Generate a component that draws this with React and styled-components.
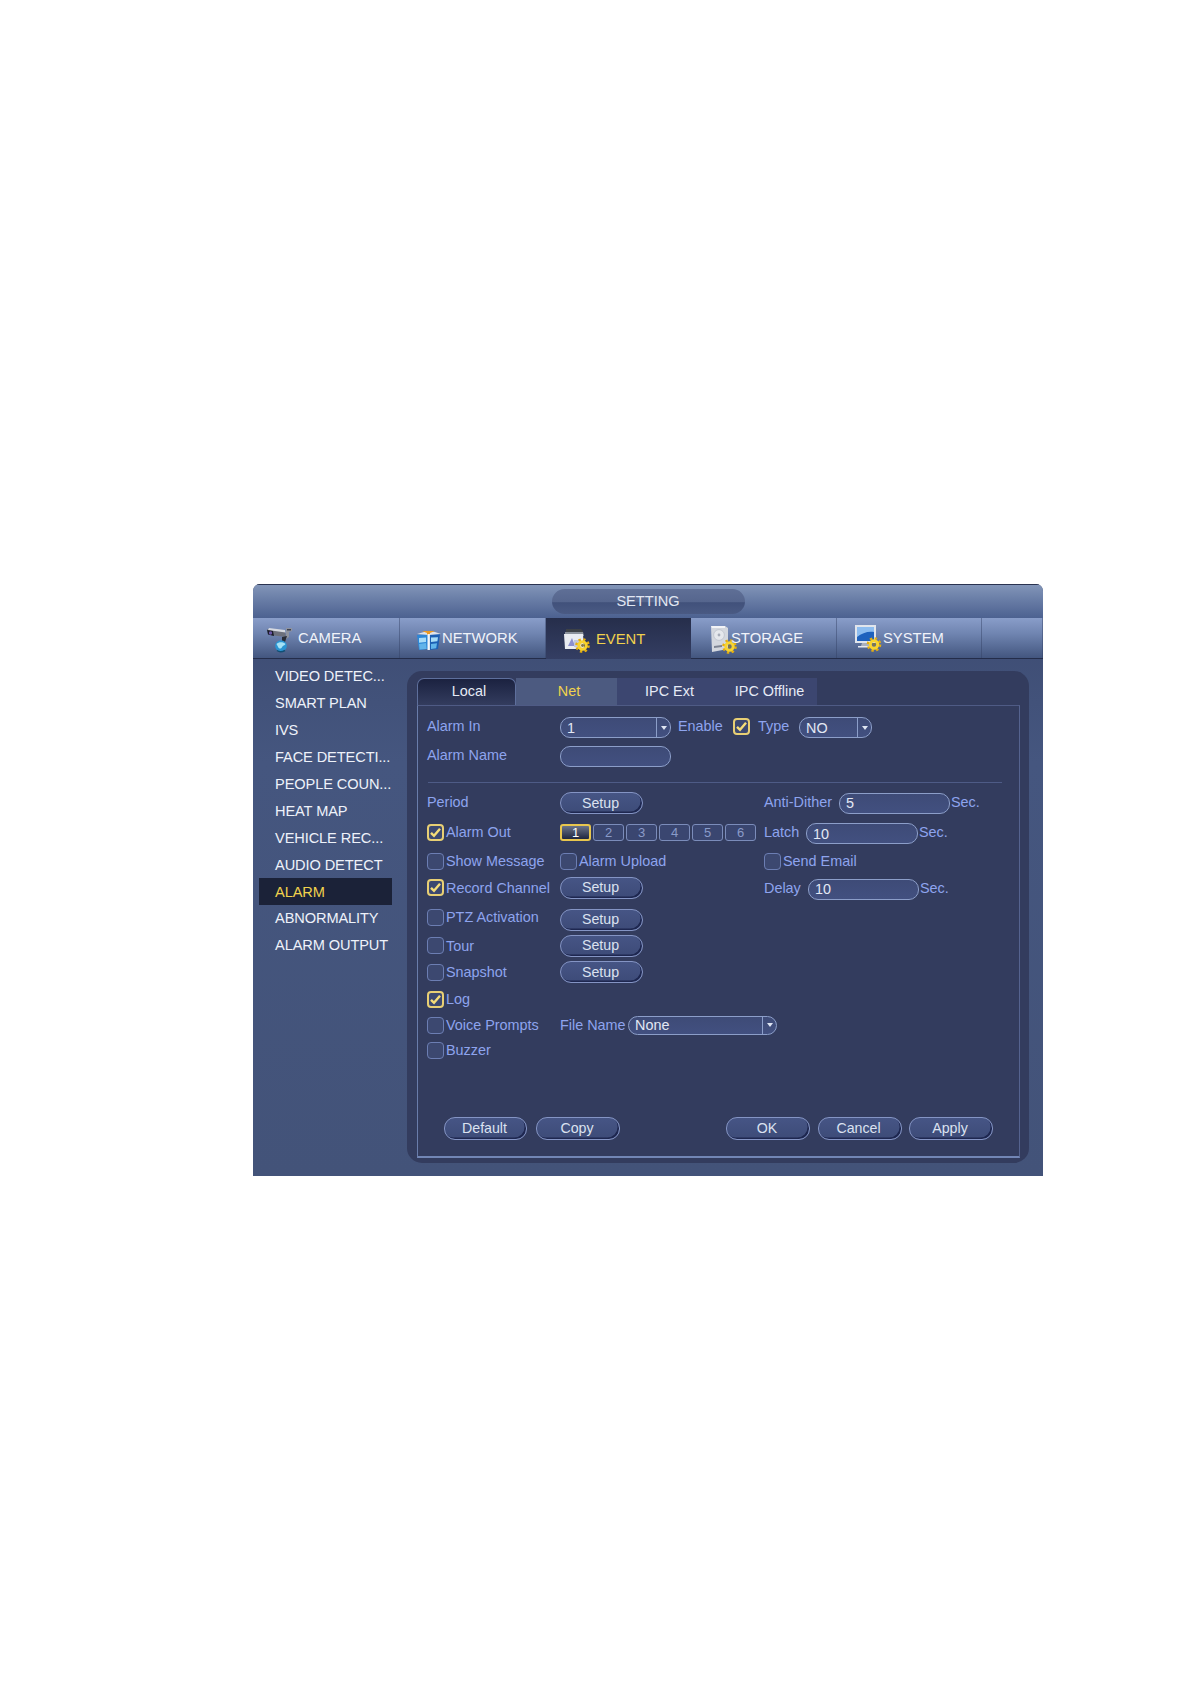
import React from "react";
import styled, { createGlobalStyle } from "styled-components";

const GlobalStyle = createGlobalStyle`
  html, body {
    margin: 0;
    padding: 0;
    background: #fff;
  }
  body {
    font-family: "Liberation Sans", Arial, sans-serif;
  }
`;

const Gear = ({ x, y }) => (
  <g transform={`translate(${x} ${y})`}>
    <circle r="6" fill="none" stroke="#e4ae10" strokeWidth="2.6" strokeDasharray="2.35 2.35" />
    <circle r="3.7" fill="none" stroke="#f9d42e" strokeWidth="3" />
    <circle r="1.4" fill="#8a7a38" />
  </g>
);

const CameraIcon = () => (
  <svg width="28" height="28" viewBox="0 0 28 28">
    <path d="M1 4l18 2 1 6-16-2z" fill="#6d707c" />
    <path d="M3 3l16 2 .5 2.5L2 5z" fill="#d6d9e0" />
    <path d="M1 5l6 1 1 5-6-1.5z" fill="#191a26" />
    <circle cx="4.5" cy="8" r="1.7" fill="#6a57a8" />
    <path d="M20 3h6v3l-3 1v5l-3 2z" fill="#8f939f" />
    <path d="M21 4h4v1.6h-4z" fill="#3e4250" />
    <path d="M16 12l5-1-2 6-3-1z" fill="#282b36" />
    <circle cx="15" cy="21" r="5.8" fill="#2a94d2" />
    <path d="M10.5 19c2-2.2 7-2.2 9 0-1 2-2.4 1-3.4 3s-3 2-4 0z" fill="#a4e2f6" />
    <path d="M11 25.5c2 1.6 5 1.6 8 0" stroke="#124f74" strokeWidth="1.5" fill="none" />
  </svg>
);

const NetworkIcon = () => (
  <svg width="26" height="26" viewBox="0 0 26 26">
    <path d="M1 9l11-1v15L3 24z" fill="#2d86d6" />
    <path d="M13 8l11 0-2 15-9 1z" fill="#1c5fb4" />
    <path d="M3 12l7-.6V16l-7 .8zM15 11.5l7-.2-.6 4-6.4.6z" fill="#a8dcf7" />
    <path d="M3 18l7-1 .6 6-7 .6zM15 18l6-.8-.8 5-5.2.8z" fill="#61b4ea" />
    <path d="M1 8l7-2 5-1 6 1 6 2-12 1z" fill="#dfe3ea" />
    <path d="M6 5h13l-5 2v2h-3V7z" fill="#ec9a23" />
    <path d="M11.5 8h2.4v16h-2.4z" fill="#f1f5fa" />
  </svg>
);

const EventIcon = () => (
  <svg width="27" height="27" viewBox="0 0 27 27">
    <path d="M3 3h15l2 2v4H3z" fill="#3d4146" />
    <path d="M2 6h18l1 4H2z" fill="#8b929c" />
    <path d="M1 8h19l1 15H2z" fill="#e9ecf2" />
    <path d="M5 20l4-8 3 8z" fill="#8b8fd0" />
    <path d="M11 14h6v7h-6z" fill="#c3c8dc" />
    <Gear x={19.5} y={19.5} />
  </svg>
);

const StorageIcon = () => (
  <svg width="28" height="30" viewBox="0 0 28 30">
    <path d="M1 2h14l3 2v21l-16 3z" fill="#d3d7de" />
    <path d="M1 2h14v2H2z" fill="#f3f4f7" />
    <circle cx="9" cy="11" r="5.4" fill="#e4e7ec" stroke="#c2c7d0" />
    <circle cx="9" cy="11" r="1.4" fill="#a5abb8" />
    <path d="M4 22l8-1v2l-8 1z" fill="#7d8493" />
    <Gear x={19.5} y={22.5} />
  </svg>
);

const SystemIcon = () => (
  <svg width="28" height="30" viewBox="0 0 28 30">
    <path d="M1 1h21v18H1z" fill="#e1e5ec" />
    <path d="M3 3h17v14H3z" fill="#1f62bd" />
    <path d="M3 3h17v5c-6-1-12 1-17 5z" fill="#8dbdf0" />
    <path d="M8 19h7l1 3H7z" fill="#aab1bd" />
    <path d="M4 22h14v1.6H4z" fill="#e6e9ef" />
    <Gear x={20} y={20.5} />
  </svg>
);

const CheckMark = () => (
  <svg width="13" height="13" viewBox="0 0 13 13">
    <path d="M2 6.8l3 3 6-7" fill="none" stroke="#f5dc78" strokeWidth="2.4" />
  </svg>
);

const Page = styled.div`
  min-height: 1684px;
  box-sizing: border-box;
  padding: 584px 0 0 253px;
  background: #fff;
`;

const Panel = styled.div`
  width: 790px;
  height: 592px;
  display: flex;
  flex-direction: column;
  overflow: hidden;
  border-radius: 7px 7px 0 0;
  background: linear-gradient(180deg, #3c4a70 0%, #45567f 30%, #435379 100%);
`;

const TitleBar = styled.div`
  height: 34px;
  box-sizing: border-box;
  flex: none;
  display: flex;
  align-items: center;
  justify-content: center;
  border-top: 1px solid #2a3350;
  background: linear-gradient(180deg, #8295b8 0%, #6e82aa 35%, #4c6190 100%);
`;

const TitlePill = styled.div`
  width: 193px;
  height: 25px;
  box-sizing: border-box;
  padding-bottom: 2px;
  display: flex;
  align-items: center;
  justify-content: center;
  border-radius: 13px;
  background: linear-gradient(180deg, #5f6f96 0%, #56668e 50%, #41517b 55%, #4a5a83 100%);
  color: #e2e7f2;
  font-size: 14.6px;
`;

const TabBar = styled.div`
  height: 41px;
  flex: none;
  display: flex;
  box-sizing: border-box;
  border-bottom: 1px solid #242d4a;
  background: linear-gradient(180deg, #899dc9 0%, #6f84b0 40%, #43567f 100%);
`;

const Tab = styled.div`
  width: ${(p) => p.$w}px;
  height: ${(p) => (p.$active ? "41px" : "40px")};
  box-sizing: border-box;
  padding-left: ${(p) => p.$pad}px;
  display: flex;
  align-items: center;
  border-right: 1px solid ${(p) => (p.$active ? "transparent" : "rgba(50, 64, 100, 0.45)")};
  background: ${(p) => (p.$active ? "linear-gradient(180deg, #262e4b 0%, #343e63 100%)" : "none")};
  color: ${(p) => (p.$active ? "#f1d24d" : "#f0f3fa")};
  font-size: 14.8px;
  svg {
    flex: none;
    margin-top: 2px;
    margin-right: ${(p) => p.$iconGap}px;
  }
`;

const Body = styled.div`
  flex: 1;
  display: flex;
  min-height: 0;
`;

const Sidebar = styled.ul`
  width: 154px;
  flex: none;
  margin: 0;
  padding: 4px 0 0 6px;
  box-sizing: border-box;
  list-style: none;
`;

const SideItem = styled.li`
  width: 133px;
  height: 26.9px;
  box-sizing: border-box;
  padding-left: 16px;
  display: flex;
  align-items: center;
  white-space: nowrap;
  font-size: 14.6px;
  letter-spacing: -0.1px;
  color: ${(p) => (p.$active ? "#f1d24d" : "#eef2fa")};
  background: ${(p) => (p.$active ? "#1b2238" : "none")};
`;

const Content = styled.div`
  flex: 1;
  margin: 12px 14px 13px 0;
  padding: 7px 9px 5px 10px;
  display: flex;
  flex-direction: column;
  border-radius: 15px;
  background: #333c5e;
`;

const SubTabs = styled.div`
  height: 27px;
  flex: none;
  display: flex;
`;

const SubTab = styled.div`
  width: ${(p) => p.$w}px;
  box-sizing: border-box;
  padding: 0 0 2px 5px;
  display: flex;
  align-items: center;
  justify-content: center;
  border-radius: ${(p) => (p.$local ? "7px 7px 0 0" : "0")};
  border: ${(p) => (p.$local ? "1px solid #5e6f9c" : "none")};
  border-bottom: none;
  background: ${(p) =>
    p.$local
      ? "linear-gradient(180deg, #1b2240 0%, #333c5e 100%)"
      : p.$net
      ? "#4c5a80"
      : "#3c4670"};
  color: ${(p) => (p.$net ? "#f1d24d" : "#e6ebf6")};
  font-size: 14.4px;
`;

const Frame = styled.div`
  flex: 1;
  display: flex;
  flex-direction: column;
  box-sizing: border-box;
  padding: 8px 0 0 9px;
  border: 1px solid #4f5b85;
  border-left-color: #6a7dab;
  border-right-color: #55638f;
  border-bottom: 2px solid #7286b5;
`;

const Row = styled.div`
  height: 22px;
  flex: none;
  margin-top: ${(p) => p.$top || 0}px;
  display: grid;
  grid-template-columns: 133px 204px 1fr;
`;

const Cell = styled.div`
  display: flex;
  align-items: center;
  grid-column: ${(p) => p.$col || "auto"};
  white-space: nowrap;
`;

const Divider = styled.div`
  width: 574px;
  height: 1px;
  flex: none;
  margin: 17px 0 6px 1px;
  background: #4e5b86;
`;

const Label = styled.span`
  display: inline-block;
  width: ${(p) => (p.$w ? `${p.$w}px` : "auto")};
  margin-left: ${(p) => p.$ml || 0}px;
  flex: none;
  color: #8ea4ee;
  font-size: 14.4px;
`;

const CheckLabel = styled.label`
  display: flex;
  align-items: center;
  gap: 2px;
  color: #8ea4ee;
  font-size: 14.4px;
`;

const Box = styled.span`
  width: 17px;
  height: 17px;
  box-sizing: border-box;
  flex: none;
  margin-right: ${(p) => p.$mr || 0}px;
  display: flex;
  align-items: center;
  justify-content: center;
  border-radius: 4px;
  border: ${(p) => (p.$on ? "2px solid #e8cf74" : "1.5px solid #6c7eb3")};
  background: #3c4870;
`;

const Field = styled.div`
  width: ${(p) => p.$w}px;
  height: ${(p) => p.$h || 21}px;
  box-sizing: border-box;
  flex: none;
  margin-top: ${(p) => p.$nudge || 0}px;
  padding-left: 6px;
  display: flex;
  align-items: center;
  justify-content: space-between;
  border-radius: 10px;
  border: 1.5px solid #8c9ec9;
  background: linear-gradient(180deg, #3e4b77 0%, #425080 100%);
  color: #e3e8f4;
  font-size: 14.4px;
`;

const Caret = styled.span`
  width: 14px;
  height: 100%;
  box-sizing: border-box;
  display: flex;
  align-items: center;
  justify-content: center;
  border-left: 1px solid #8c9ec9;
  &::after {
    content: "";
    border-left: 3.5px solid transparent;
    border-right: 3.5px solid transparent;
    border-top: 4px solid #dfe5f2;
  }
`;

const PillButton = styled.button`
  width: ${(p) => p.$w || 83}px;
  height: ${(p) => p.$h || 22}px;
  flex: none;
  margin: ${(p) => p.$nudge || 0}px 0 0;
  padding: 0 2px 1px 0;
  box-sizing: border-box;
  border-radius: 11px;
  border: 1.5px solid #8494c4;
  background: linear-gradient(180deg, #465585 0%, #3d4b78 100%);
  box-shadow: inset -1.5px -1.5px 0 #1e2750;
  color: #dbe2f0;
  font-family: inherit;
  font-size: 14.2px;
`;

const NumRow = styled.div`
  display: flex;
  gap: 2px;
`;

const NumBox = styled.span`
  width: 31px;
  height: 17px;
  box-sizing: border-box;
  display: flex;
  align-items: center;
  justify-content: center;
  border-radius: 3px;
  border: ${(p) => (p.$on ? "2px solid #e8c64e" : "1.5px solid #7b8cba")};
  background: ${(p) =>
    p.$on ? "linear-gradient(180deg, #6a7389 0%, #1f2740 100%)" : "#3a4670"};
  color: ${(p) => (p.$on ? "#fff" : "#8a9bc9")};
  font-size: 13px;
`;

const Footer = styled.div`
  margin-top: auto;
  padding: 0 26px 16px 17px;
  display: flex;
  justify-content: space-between;
`;

const FooterGroup = styled.div`
  display: flex;
  gap: ${(p) => p.$gap}px;
`;

const tabs = [
  { name: "CAMERA", w: 147, pad: 13, iconGap: 4, Icon: CameraIcon },
  { name: "NETWORK", w: 146, pad: 16, iconGap: 0, Icon: NetworkIcon },
  { name: "EVENT", w: 145, pad: 17, iconGap: 6, active: true, Icon: EventIcon },
  { name: "STORAGE", w: 146, pad: 19, iconGap: -7, Icon: StorageIcon },
  { name: "SYSTEM", w: 145, pad: 17, iconGap: 1, Icon: SystemIcon },
  { name: "", w: 61, pad: 0, iconGap: 0 },
];

const sideItems = [
  "VIDEO DETEC...",
  "SMART PLAN",
  "IVS",
  "FACE DETECTI...",
  "PEOPLE COUN...",
  "HEAT MAP",
  "VEHICLE REC...",
  "AUDIO DETECT",
  "ALARM",
  "ABNORMALITY",
  "ALARM OUTPUT",
];

const Check = ({ on, children }) => (
  <CheckLabel>
    <Box $on={on}>{on && <CheckMark />}</Box>
    {children}
  </CheckLabel>
);

const App = () => {
  return (
    <Page>
      <GlobalStyle />
      <Panel>
        <TitleBar>
          <TitlePill>SETTING</TitlePill>
        </TitleBar>
        <TabBar>
          {tabs.map((t) => (
            <Tab key={t.name} $w={t.w} $pad={t.pad} $iconGap={t.iconGap} $active={t.active}>
              {t.Icon && <t.Icon />}
              {t.name}
            </Tab>
          ))}
        </TabBar>
        <Body>
          <Sidebar>
            {sideItems.map((item) => (
              <SideItem key={item} $active={item === "ALARM"}>
                {item}
              </SideItem>
            ))}
          </Sidebar>
          <Content>
            <SubTabs>
              <SubTab $w={99} $local>Local</SubTab>
              <SubTab $w={101} $net>Net</SubTab>
              <SubTab $w={100}>IPC Ext</SubTab>
              <SubTab $w={100}>IPC Offline</SubTab>
            </SubTabs>
            <Frame>
              <Row>
                <Cell><Label>Alarm In</Label></Cell>
                <Cell $col="2 / 4">
                  <Field $w={111} $nudge={3}>1<Caret /></Field>
                  <Label $w={55} $ml={7}>Enable</Label>
                  <Box $on $mr={8}><CheckMark /></Box>
                  <Label $w={41}>Type</Label>
                  <Field $w={73} $nudge={3}>NO<Caret /></Field>
                </Cell>
              </Row>
              <Row $top={7}>
                <Cell><Label>Alarm Name</Label></Cell>
                <Cell><Field $w={111} $nudge={3} /></Cell>
              </Row>
              <Divider />
              <Row>
                <Cell><Label>Period</Label></Cell>
                <Cell><PillButton $nudge={3}>Setup</PillButton></Cell>
                <Cell>
                  <Label $w={75}>Anti-Dither</Label>
                  <Field $w={111} $nudge={3}>5</Field>
                  <Label $ml={1}>Sec.</Label>
                </Cell>
              </Row>
              <Row $top={9}>
                <Cell><Check on>Alarm Out</Check></Cell>
                <Cell>
                  <NumRow>
                    {[1, 2, 3, 4, 5, 6].map((n) => (
                      <NumBox key={n} $on={n === 1}>{n}</NumBox>
                    ))}
                  </NumRow>
                </Cell>
                <Cell>
                  <Label $w={42}>Latch</Label>
                  <Field $w={112} $nudge={3}>10</Field>
                  <Label $ml={1}>Sec.</Label>
                </Cell>
              </Row>
              <Row $top={8}>
                <Cell><Check>Show Message</Check></Cell>
                <Cell><Check>Alarm Upload</Check></Cell>
                <Cell><Check>Send Email</Check></Cell>
              </Row>
              <Row $top={3.5}>
                <Cell><Check on>Record Channel</Check></Cell>
                <Cell><PillButton>Setup</PillButton></Cell>
                <Cell>
                  <Label $w={44}>Delay</Label>
                  <Field $w={111} $nudge={3}>10</Field>
                  <Label $ml={1}>Sec.</Label>
                </Cell>
              </Row>
              <Row $top={6}>
                <Cell><Check>PTZ Activation</Check></Cell>
                <Cell><PillButton $nudge={5}>Setup</PillButton></Cell>
              </Row>
              <Row $top={9}>
                <Cell><Check>Tour</Check></Cell>
                <Cell><PillButton>Setup</PillButton></Cell>
              </Row>
              <Row $top={4.5}>
                <Cell><Check>Snapshot</Check></Cell>
                <Cell><PillButton>Setup</PillButton></Cell>
              </Row>
              <Row $top={5}>
                <Cell><Check on>Log</Check></Cell>
              </Row>
              <Row $top={4}>
                <Cell><Check>Voice Prompts</Check></Cell>
                <Cell $col="2 / 4">
                  <Label $w={68}>File Name</Label>
                  <Field $w={149} $h={19}>None<Caret /></Field>
                </Cell>
              </Row>
              <Row $top={3}>
                <Cell><Check>Buzzer</Check></Cell>
              </Row>
              <Footer>
                <FooterGroup $gap={9}>
                  <PillButton $h={23}>Default</PillButton>
                  <PillButton $w={84} $h={23}>Copy</PillButton>
                </FooterGroup>
                <FooterGroup $gap={7.5}>
                  <PillButton $w={84} $h={23}>OK</PillButton>
                  <PillButton $w={84} $h={23}>Cancel</PillButton>
                  <PillButton $w={84} $h={23}>Apply</PillButton>
                </FooterGroup>
              </Footer>
            </Frame>
          </Content>
        </Body>
      </Panel>
    </Page>
  );
};

export default App;
